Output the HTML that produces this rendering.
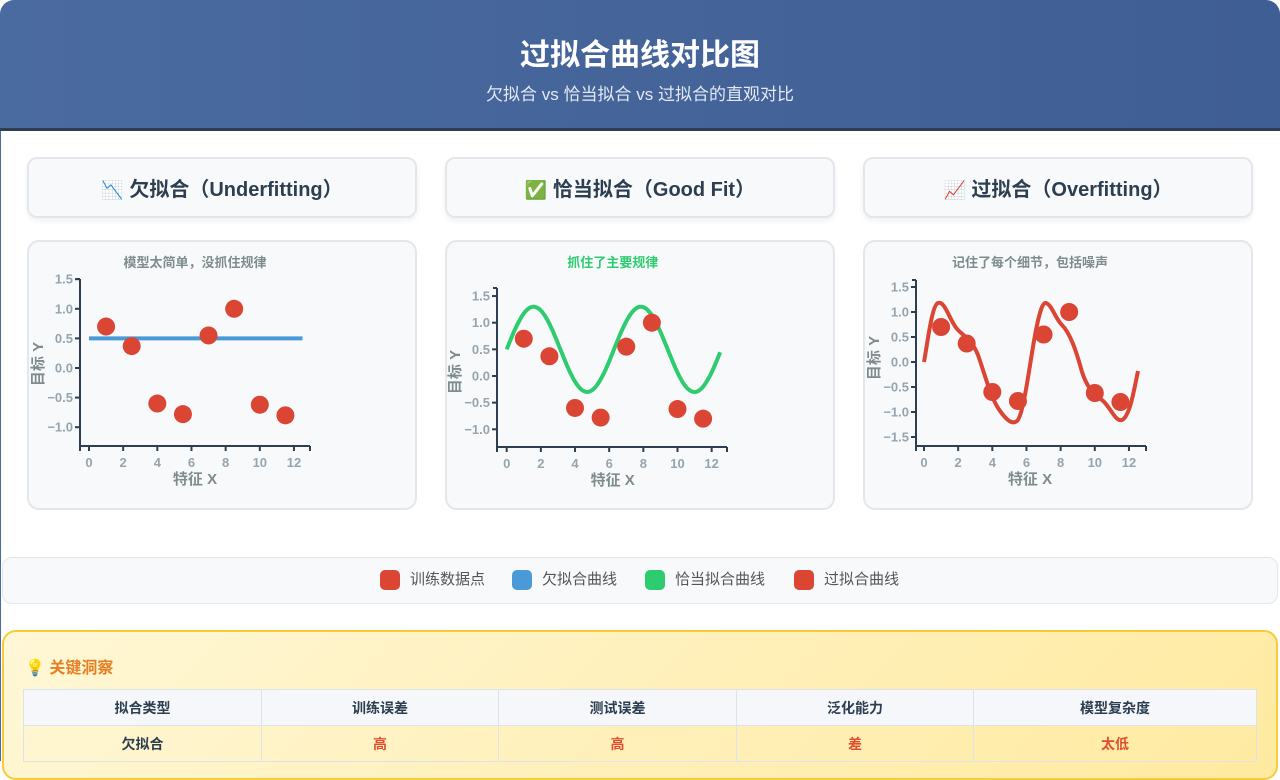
<!DOCTYPE html>
<html><head><meta charset="utf-8"><style>
*{margin:0;padding:0;box-sizing:border-box}
body{width:1280px;height:761px;overflow:hidden;background:#fff;font-family:"Liberation Sans","Noto Sans CJK SC",sans-serif;position:relative}
.abs{position:absolute}
.hdr{left:0;top:0;width:1280px;height:128px;background:linear-gradient(90deg,#4a6ba0,#3f5e94);border-radius:14px 14px 0 0;color:#fff;text-align:center}
.hdr h1{position:absolute;top:30px;width:100%;font-size:30px;font-weight:bold}
.hdr p{position:absolute;top:80px;width:100%;font-size:17px;color:#e3e9f3}
.line{left:0;top:128px;width:1280px;height:3px;background:#2c3e50}
.tc{height:61px;width:390px;top:157px;background:#f8f9fb;border:2px solid #e3e7ec;border-radius:10px;box-shadow:0 3px 6px rgba(0,0,0,.06);text-align:center;line-height:63px;font-size:20px;font-weight:bold;color:#2c3e50}
.cc{height:270px;width:390px;top:240px;background:#f8f9fb;border:2px solid #e3e7ec;border-radius:12px}
.leg{left:2px;top:557px;width:1276px;height:47px;background:#f8f9fb;border:1px solid #e3e7ec;border-radius:10px}
.li{top:570px;width:20px;height:20px;border-radius:5px}
.lt{top:570px;font-size:15px;color:#555;line-height:20px}
.ins{left:2px;top:630px;width:1276px;height:150px;border:2px solid #f7cb3c;border-radius:14px;background:linear-gradient(135deg,#fff7d6,#ffeaa0)}
table{position:absolute;left:23px;top:689px;width:1234px;border-collapse:collapse;font-size:14px;font-weight:bold}
td{border:1px solid #dde3ea;text-align:center;height:36px}
tr.h td{background:#f5f7fa;color:#2c3e50}
tr.r td{color:#e05030}
</style></head><body>
<div class="abs hdr"><h1>过拟合曲线对比图</h1><p>欠拟合 vs 恰当拟合 vs 过拟合的直观对比</p></div>
<div class="abs line"></div>
<div class="abs" style="left:0;top:131px;width:1px;height:630px;background:#4a6ba0"></div>
<div class="abs tc" style="left:27px"><span style="font-size:18px">📉</span> 欠拟合（Underfitting）</div>
<div class="abs tc" style="left:445px"><span style="font-size:18px">✅</span> 恰当拟合（Good Fit）</div>
<div class="abs tc" style="left:863px"><span style="font-size:18px">📈</span> 过拟合（Overfitting）</div>
<div class="abs cc" style="left:27px"></div>
<div class="abs cc" style="left:445px"></div>
<div class="abs cc" style="left:863px"></div>
<svg class="abs" style="left:0;top:0" width="1280" height="761" font-family="Liberation Sans,Noto Sans CJK SC,sans-serif">
<g id="charts" font-weight="bold"></g>
</svg>
<div class="abs leg"></div>
<div class="abs li" style="left:380px;background:#db4534"></div><div class="abs lt" style="left:410px">训练数据点</div>
<div class="abs li" style="left:512px;background:#4a9ad8"></div><div class="abs lt" style="left:542px">欠拟合曲线</div>
<div class="abs li" style="left:645px;background:#2ecc71"></div><div class="abs lt" style="left:675px">恰当拟合曲线</div>
<div class="abs li" style="left:794px;background:#db4534"></div><div class="abs lt" style="left:824px">过拟合曲线</div>
<div class="abs ins"></div>
<div class="abs" style="left:25px;top:654px;font-size:16px;font-weight:bold;color:#e67e22">💡 关键洞察</div>
<table>
<tr class="h"><td style="width:238px">拟合类型</td><td style="width:237px">训练误差</td><td style="width:238px">测试误差</td><td style="width:237px">泛化能力</td><td>模型复杂度</td></tr>
<tr class="r"><td style="color:#2c3e50">欠拟合</td><td>高</td><td>高</td><td>差</td><td>太低</td></tr>
</table>
<script>
var pts=[[1,.7],[2.5,.37],[4,-.6],[5.5,-.78],[7,.55],[8.5,1],[10,-.62],[11.5,-.8]];
var g=document.getElementById('charts'),s='';
function chart(o){
 var X=function(x){return o.x0+17.08*x},Y=function(y){return o.y0-o.sy*y};
 var cx=o.x0+106;
 s+='<text x="'+cx+'" y="'+(o.ty)+'" text-anchor="middle" font-size="13" fill="'+o.tc+'">'+o.title+'</text>';
 s+='<path d="M'+o.ax+' '+o.atop+'V'+o.ab+'H'+(o.ax+230)+'" fill="none" stroke="#2c3e50" stroke-width="2"/>';
 s+='<path d="M'+(o.ax-4)+' '+o.atop+'H'+o.ax+'M'+(o.ax+230)+' '+o.ab+'v5M'+o.ax+' '+o.ab+'v5" stroke="#2c3e50" stroke-width="2"/>';
 for(var v=o.ymax;v>=o.ymin-1e-9;v-=.5){var yy=Y(v);s+='<line x1="'+(o.ax-5)+'" x2="'+o.ax+'" y1="'+yy+'" y2="'+yy+'" stroke="#2c3e50" stroke-width="2"/><text x="'+(o.ax-7)+'" y="'+(yy+4.5)+'" text-anchor="end" font-size="13" fill="#95a5b0">'+(v<0?'\u2212':'')+Math.abs(v).toFixed(1)+'</text>';}
 for(var k=0;k<=12;k+=2){var xx=X(k);s+='<line x1="'+xx+'" x2="'+xx+'" y1="'+o.ab+'" y2="'+(o.ab+5)+'" stroke="#2c3e50" stroke-width="2"/><text x="'+xx+'" y="'+(o.ab+21)+'" text-anchor="middle" font-size="13" fill="#95a5b0">'+k+'</text>';}
 s+='<text x="'+(o.x0+106)+'" y="'+(o.ab+38)+'" text-anchor="middle" font-size="15" fill="#7f8c8d">特征 X</text>';
 s+='<text transform="translate('+(o.ax-37)+','+(o.y0-4)+') rotate(-90)" text-anchor="middle" font-size="15" fill="#7f8c8d">目标 Y</text>';
 s+=o.curve(X,Y);
 pts.forEach(function(p){s+='<circle cx="'+X(p[0])+'" cy="'+Y(p[1])+'" r="9" fill="#db4534"/>';});
}
chart({x0:89,y0:368,sy:59.2,ax:80,atop:279,ab:446,ymax:1.5,ymin:-1,ty:267,tc:'#7f8c8d',title:'模型太简单，没抓住规律',
 curve:function(X,Y){return '<line x1="'+X(0)+'" x2="'+X(12.5)+'" y1="'+Y(.5)+'" y2="'+Y(.5)+'" stroke="#4a9ad8" stroke-width="4"/>';}});
chart({x0:506.7,y0:376,sy:53.3,ax:497,atop:288,ab:447,ymax:1.5,ymin:-1,ty:267,tc:'#2ecc71',title:'抓住了主要规律',
 curve:function(X,Y){var d='';for(var x=0;x<=12.55;x+=.1){d+=(d?'L':'M')+X(x).toFixed(1)+' '+Y(.5+.8*Math.sin(x)).toFixed(1);}return '<path d="'+d+'" fill="none" stroke="#2ecc71" stroke-width="4"/>';}});
chart({x0:924,y0:362,sy:50,ax:916,atop:280,ab:446,ymax:1.5,ymin:-1.5,ty:267,tc:'#7f8c8d',title:'记住了每个细节，包括噪声',
 curve:function(){return '<path d="M924 362C928 340 932 305 938 303C945 300 950 322 958 330C966 338 972 340 978 355C985 375 990 395 998 408C1006 420 1012 425 1017 421C1024 415 1030 360 1036 330C1040 310 1043 302 1046 303C1052 305 1055 318 1062 325C1070 333 1076 350 1082 372C1088 390 1095 395 1102 400C1110 406 1115 422 1122 420C1130 416 1134 390 1138 371" fill="none" stroke="#db4534" stroke-width="4" stroke-linejoin="round"/>';}});
g.innerHTML=s;
</script>
</body></html>
